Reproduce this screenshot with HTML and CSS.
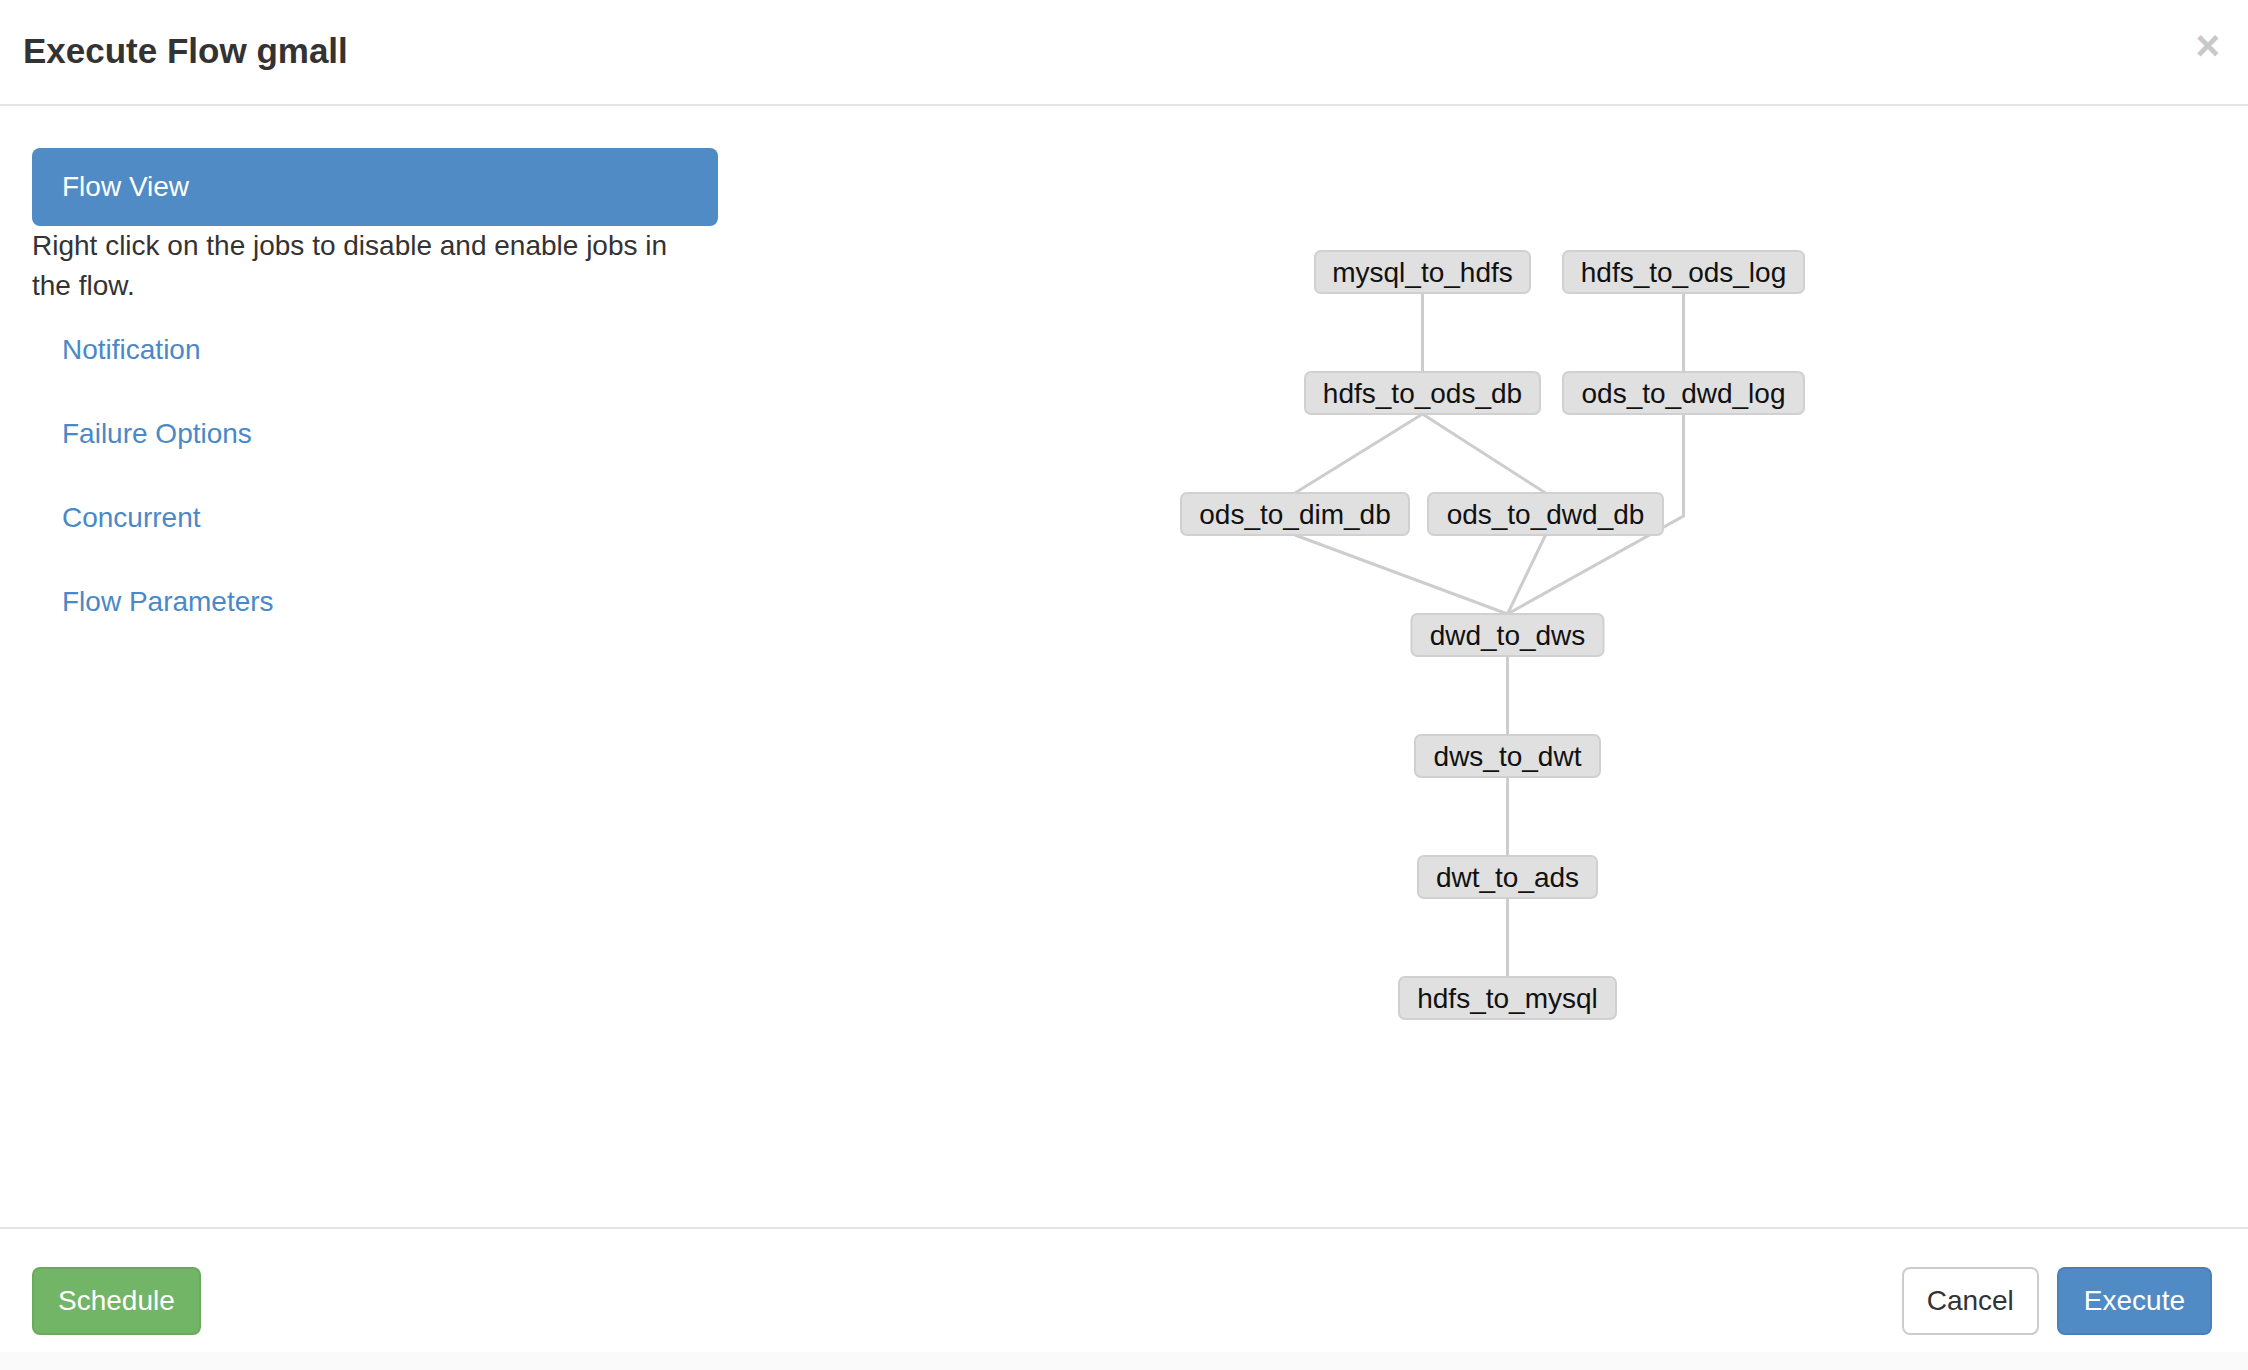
FILE: index.html
```html
<!DOCTYPE html>
<html>
	<head>
		<meta charset="UTF-8">
		<title>Execute Flow gmall</title>
		<link rel="stylesheet" href="styles.css">
	</head>
	<body>
		<div class="modal">
			<div class="modal-header">
				<h4 class="modal-title">Execute Flow gmall</h4>
				<button class="close" type="button">&times;</button>
			</div>

			<div class="modal-body">
				<div class="side">
					<ul class="nav">
						<li class="active"><a href="#">Flow View</a></li>
						<li class="hint">Right click on the jobs to disable and enable jobs in the flow.</li>
						<li><a href="#">Notification</a></li>
						<li><a href="#">Failure Options</a></li>
						<li><a href="#">Concurrent</a></li>
						<li><a href="#">Flow Parameters</a></li>
					</ul>
				</div>

				<div class="graph">
					<svg class="flow-svg" width="1494" height="900" viewBox="0 0 1494 900">
						<!-- edges -->
						<g class="edges">
							<polyline points="704.5,145 704.5,224" />
							<polyline points="965.5,145 965.5,224" />
							<polyline points="704.5,266 577,345" />
							<polyline points="704.5,266 827.5,345" />
							<polyline points="965.5,266 965.5,368 789.5,466" />
							<polyline points="577,387 789.5,466" />
							<polyline points="827.5,387 789.5,466" />
							<polyline points="789.5,508 789.5,587" />
							<polyline points="789.5,629 789.5,708" />
							<polyline points="789.5,750 789.5,829" />
						</g>
						<!-- jobs -->
						<g class="node"><rect x="597" y="103" width="215" height="42" /><text x="704.5" y="134">mysql_to_hdfs</text></g>
						<g class="node"><rect x="845" y="103" width="241" height="42" /><text x="965.5" y="134">hdfs_to_ods_log</text></g>
						<g class="node"><rect x="587" y="224" width="235" height="42" /><text x="704.5" y="255">hdfs_to_ods_db</text></g>
						<g class="node"><rect x="845" y="224" width="241" height="42" /><text x="965.5" y="255">ods_to_dwd_log</text></g>
						<g class="node"><rect x="463" y="345" width="228" height="42" /><text x="577" y="376">ods_to_dim_db</text></g>
						<g class="node"><rect x="710" y="345" width="235" height="42" /><text x="827.5" y="376">ods_to_dwd_db</text></g>
						<g class="node"><rect x="693.5" y="466" width="192" height="42" /><text x="789.5" y="497">dwd_to_dws</text></g>
						<g class="node"><rect x="697" y="587" width="185" height="42" /><text x="789.5" y="618">dws_to_dwt</text></g>
						<g class="node"><rect x="700" y="708" width="179" height="42" /><text x="789.5" y="739">dwt_to_ads</text></g>
						<g class="node"><rect x="681" y="829" width="217" height="42" /><text x="789.5" y="860">hdfs_to_mysql</text></g>
					</svg>
				</div>
			</div>

			<div class="modal-footer">
				<button class="btn btn-success" type="button">Schedule</button>
				<div class="right-buttons">
					<button class="btn btn-default" type="button">Cancel</button>
					<button class="btn btn-primary" type="button">Execute</button>
				</div>
			</div>
		</div>
	</body>
</html>
```

FILE: styles.css
```css
html, body {
	margin: 0;
	height: 100%;
}
body {
	font-family: "Liberation Sans", Arial, sans-serif;
	font-size: 28px;
	line-height: 40px;
	color: #333333;
	background: linear-gradient(#fefefe, #fafafa);
	overflow: hidden;
}

.modal {
	width: 2248px;
	height: 1352px;
	background-color: #ffffff;
	display: flex;
	flex-direction: column;
}

/* header */
.modal-header {
	display: flex;
	justify-content: space-between;
	align-items: flex-start;
	padding: 26px 28px 28px 23px;
	border-bottom: 2px solid #e5e5e5;
}
.modal-title {
	margin: 0;
	font-size: 35px;
	line-height: 50px;
	font-weight: bold;
	color: #333333;
}
.close {
	padding: 0;
	border: 0;
	background: transparent;
	font-family: "Liberation Sans", Arial, sans-serif;
	font-size: 42px;
	line-height: 40px;
	font-weight: bold;
	color: #c8c8c8;
}

/* body */
.modal-body {
	flex: 1;
	display: flex;
	padding: 42px 36px 0 32px;
	min-height: 0;
}
.side {
	width: 686px;
	flex: none;
}
.nav {
	list-style: none;
	margin: 0;
	padding: 0;
}
.nav li + li {
	margin-top: 4px;
}
.nav li.hint {
	margin-top: 0;
}
.nav a {
	display: block;
	padding: 20px 30px;
	color: #4a88c7;
	text-decoration: none;
	border-radius: 8px;
}
.nav li.active a {
	padding: 19px 30px;
	background-color: #518bc5;
	color: #ffffff;
}
.hint {
	max-width: 650px;
}

.graph {
	flex: 1;
}
.flow-svg {
	display: block;
}
.edges polyline {
	fill: none;
	stroke: #cdcdcd;
	stroke-width: 3;
}
.node rect {
	fill: #e0e0e0;
	stroke: #d0d0d0;
	stroke-width: 2;
	rx: 6px;
}
.node text {
	font-family: "Liberation Sans", Arial, sans-serif;
	font-size: 28px;
	fill: #111111;
	text-anchor: middle;
}

/* footer */
.modal-footer {
	display: flex;
	justify-content: space-between;
	align-items: flex-start;
	height: 125px;
	box-sizing: border-box;
	padding: 38px 36px 0 32px;
	border-top: 2px solid #e5e5e5;
}
.right-buttons {
	display: flex;
	gap: 18px;
}
.btn {
	font-family: "Liberation Sans", Arial, sans-serif;
	font-size: 28px;
	line-height: 40px;
	padding: 12px 24px;
	border: 2px solid transparent;
	border-radius: 8px;
}
.btn-success {
	background-color: #73b566;
	border-color: #69ab5c;
	color: #ffffff;
}
.btn-default {
	background-color: #ffffff;
	border-color: #cccccc;
	color: #333333;
	padding: 12px 23px;
}
.btn-primary {
	background-color: #518bc5;
	border-color: #4a80b9;
	color: #ffffff;
	padding: 12px 25px;
}
```
